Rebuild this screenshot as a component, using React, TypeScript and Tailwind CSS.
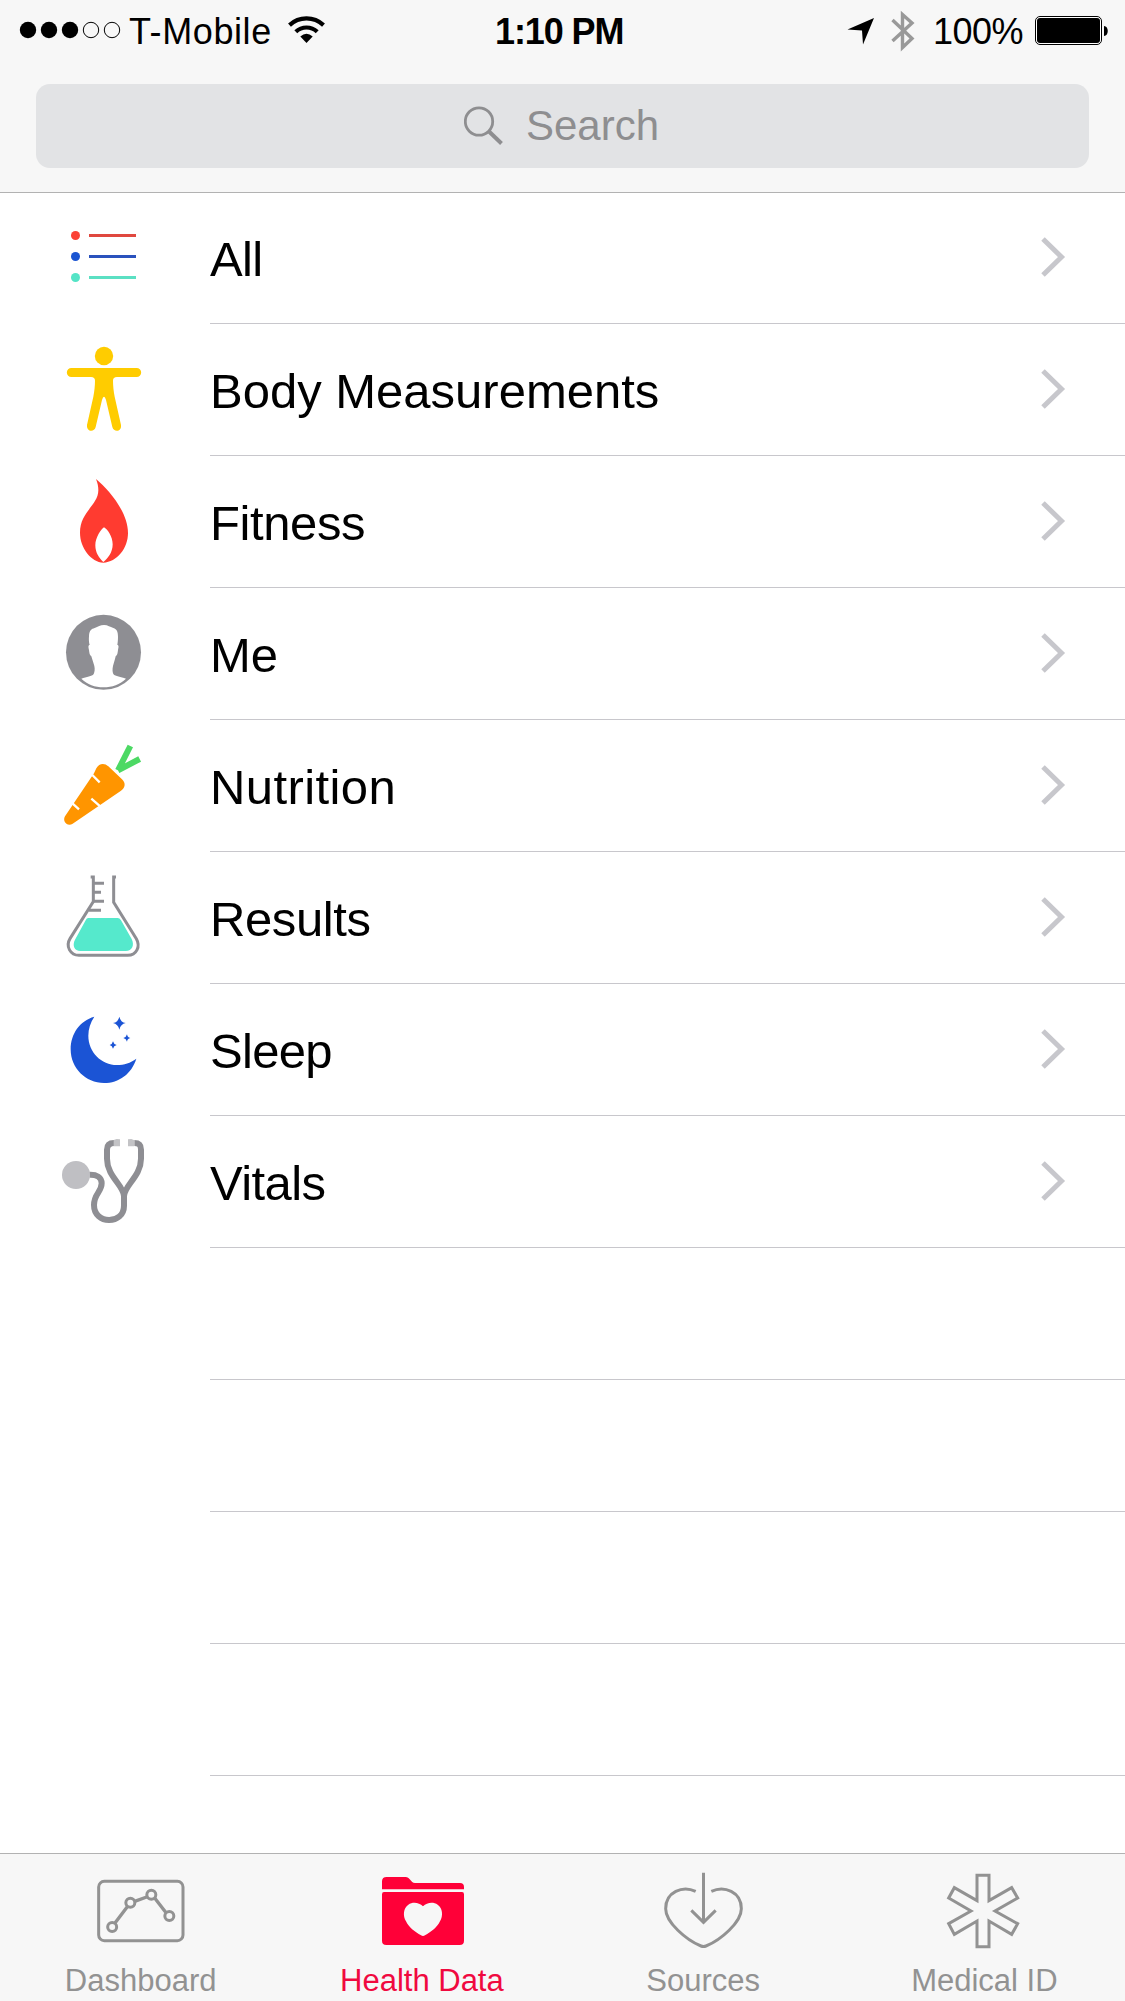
import type { ReactNode } from "react";

type Category = { name: string; viewBox: string; tracking: string; icon: ReactNode };

const categories: Category[] = [
  {
    name: "All",
    viewBox: "60 -24 270 396",
    tracking: "tracking-[-0.7px]",
    icon: (
      <>
        <circle cx="106.500" cy="106.500" r="13.500" fill="#fb4135" />
        <circle cx="106.500" cy="169.500" r="13.500" fill="#1b55d2" />
        <circle cx="106.500" cy="232.500" r="13.500" fill="#54e4c6" />
        <rect x="147" y="102" width="141" height="9" fill="#e0483f" />
        <rect x="147" y="165" width="141" height="9" fill="#2a52bd" />
        <rect x="147" y="228" width="141" height="9" fill="#5be0c3" />
      </>
    ),
  },
  {
    name: "Body Measurements",
    viewBox: "60 372 270 396",
    tracking: "tracking-normal",
    icon: (
      <g fill="#ffcc00">
        <circle cx="192" cy="468" r="27.500" />
        <path d="M94 504H290A13.500 13.500 0 0 1 290 531H231C223 531 219 535 219 542C219 556 221 575 224 590L243 675C246 696 221 698 217 681L198 600Q192 580 186 600L167 681C163 698 139 696 141 675L160 590C163 575 165 556 165 542C165 535 161 531 153 531H94A13.500 13.500 0 0 1 94 504Z" />
      </g>
    ),
  },
  {
    name: "Fitness",
    viewBox: "60 -12 270 396",
    tracking: "tracking-[-0.4px]",
    icon: (
      <path
        fill="#ff3b30"
        fillRule="evenodd"
        d="M168 57C205 88 264 155 264 219C264 265 231 306 190 308C153 306 120 264 120 218C120 155 175 136 175 91C175 79 173 69 168 57ZM192 202C183 208 166 233 166 256C166 279 178 295 190 306C204 295 218 277 218 253C218 230 202 207 192 202Z"
      />
    ),
  },
  {
    name: "Me",
    viewBox: "60 384 270 396",
    tracking: "tracking-normal",
    icon: (
      <>
        <circle cx="190.500" cy="577" r="112.500" fill="#8e8e93" />
        <path
          fill="#fff"
          d="M192 495C204 495 210 501 220 504C231 507 234 517 234 530C234 541 233 548 232 555C237 555 236 562 234 570C233 579 232 586 227 589C224 602 221 610 219 618C217 627 217 636 220 642C226 650 243 650 258 656C240 673 216 682 190.500 682C165 682 142 673 124 656C140 650 156 650 161 642C164 636 165 627 163 618C161 610 158 602 154 589C149 586 148 579 147 570C145 562 144 555 149 555C147 548 146 541 147 528C148 511 154 507 164 504C174 500 181 495 192 495Z"
        />
      </>
    ),
  },
  {
    name: "Nutrition",
    viewBox: "60 -15 270 396",
    tracking: "tracking-[0.4px]",
    icon: (
      <>
        <path d="M234 136L271 63M234 136L299 102" fill="none" stroke="#4cd964" strokeWidth="18" />
        <path
          fill="#ff9500"
          d="M162 145L169 130C177 114 194 113 205 124L246 163C258 174 256 189 243 197L98 296C83 306 66 290 75 274Z"
        />
        <path d="M157 150L179 172M154 221L184 247M94 232L117 253" fill="none" stroke="#fff" strokeWidth="7" />
      </>
    ),
  },
  {
    name: "Results",
    viewBox: "60 381 270 396",
    tracking: "tracking-[-0.4px]",
    icon: (
      <>
        <g fill="none" stroke="#8e8e93" strokeWidth="9">
          <path d="M152 456H160V530L90 641C76 664 91 691 117 691H263C290 691 302 664 289 641L221 532V456H228" />
          <path d="M160 475H192M160 502H183M158 529H192M147 556H183" />
        </g>
        <path fill="#55e9cc" d="M145 579H233Q239 579 243 586L275 642C284 660 277 678 257 678H121C103 678 96 661 105 644L137 586Q140 579 145 579Z" />
      </>
    ),
  },
  {
    name: "Sleep",
    viewBox: "60 -18 270 396",
    tracking: "tracking-[-0.7px]",
    icon: (
      <g fill="#1b54d5">
        <path d="M163 80C119 92 92 132 92 178C92 235 137 279 192 279C237 279 275 251 289 206C271 219 253 225 231 225C184 225 145 186 145 137C145 116 151 98 163 80Z" />
        <path d="M238 80Q242 97 257 99Q242 102 238 119Q234 102 219 99Q234 97 238 80Z" />
        <path d="M261 133Q262 142 271 144Q262 146 261 155Q259 146 250 144Q259 142 261 133Z" />
        <path d="M219 154Q221 163 230 165Q221 167 219 176Q217 167 209 165Q217 163 219 154Z" />
      </g>
    ),
  },
  {
    name: "Vitals",
    viewBox: "60 378 270 396",
    tracking: "tracking-[-0.6px]",
    icon: (
      <>
        <path
          fill="none"
          stroke="#8e8e93"
          strokeWidth="18"
          d="M222 459C207 459 201 466 201 479V506C201 560 252 586 252 619V647C252 705 162 705 162 645C162 611 185 606 185 580C185 562 170 553 148 554M283 459C298 459 303 466 303 479V506C303 560 252 586 252 619"
        />
        <circle cx="108" cy="555" r="42" fill="#bfbfc3" />
        <path fill="#c3c3c6" d="M221 450L230 447L240 448V469L221 469ZM264 448L274 447L283 451V469L264 469Z" />
      </>
    ),
  },
];

const tabs = [
  {
    label: "Dashboard",
    viewBox: "137 42 270 240",
    icon: (
      <g fill="none" stroke="#929292" strokeWidth="9">
        <rect x="145" y="124" width="253" height="178" rx="17" />
        <path d="M194 249L231 200M253 184L289 171M313 174L346 217" strokeWidth="10" />
        <circle cx="185.500" cy="261" r="13.500" />
        <circle cx="240" cy="188.500" r="13.500" />
        <circle cx="303" cy="164.500" r="13.500" />
        <circle cx="357" cy="228" r="13.500" />
      </g>
    ),
  },
  {
    label: "Health Data",
    active: true,
    viewBox: "171 42 270 240",
    icon: (
      <>
        <path
          fill="#ff0038"
          d="M186 148V124Q186 111 200 111H256C272 111 271 129 285 129H420Q432 129 432 141V148ZM192 156H426Q432 156 432 163V302Q432 315 419 315H199Q186 315 186 302V163Q186 156 192 156Z"
        />
        <path fill="#f7f7f7" d="M309 199C321 187 340 185 353 194C368 204 370 227 360 244C350 264 333 276 315 286Q309 290 303 286C285 276 268 264 258 244C248 227 250 204 265 194C278 185 297 187 309 199Z" />
      </>
    ),
  },
  {
    label: "Sources",
    viewBox: "114 42 270 240",
    icon: (
      <g fill="none" stroke="#929292" strokeWidth="9">
        <path d="M250.500 98V248M214 211L250.500 247L287 211" />
        <path d="M227 154C188 136 137 155 137 206C137 247 199 300 243 318Q250.500 321 258 318C302 300 364 247 364 206C364 155 313 136 274 154" />
      </g>
    ),
  },
  {
    label: "Medical ID",
    viewBox: "148 42 270 240",
    icon: (
      <path
        fill="none"
        stroke="#929292"
        strokeWidth="9"
        d="M262 106H298V182L366 143L384 174L316 213L384 251L366 283L298 243V320H262V243L194 283L177 251L244 213L177 174L194 143L262 182Z"
      />
    ),
  },
];

function StatusBar() {
  return (
    <div className="flex h-[62px] items-center text-[36px] leading-none text-black">
      <div className="flex w-[495px] items-center pl-[19px]">
        <svg width="104" height="18" viewBox="0 0 104 18" className="-mt-[2px]">
          <circle cx="9" cy="9" r="8.200" />
          <circle cx="30" cy="9" r="8.200" />
          <circle cx="51" cy="9" r="8.200" />
          <circle cx="72" cy="9" r="7.700" fill="none" stroke="#000" />
          <circle cx="93" cy="9" r="7.700" fill="none" stroke="#000" />
        </svg>
        <span className="ml-[6px] mt-[2px] tracking-[0.6px]">T-Mobile</span>
        <svg width="40" height="32" viewBox="0 0 40 32" className="ml-[14px] -mt-[2px]">
          <g fill="none" stroke="#000" strokeWidth="4.200">
            <path d="M3.500 11.100A25 25 0 0 1 37.500 11.100" />
            <path d="M9.800 17.800A15.500 15.500 0 0 1 31.200 17.800" />
          </g>
          <path d="M20.500 29L14.300 22.600Q20.500 17 26.700 22.600Z" />
        </svg>
      </div>
      <span className="mt-[2px] font-bold tracking-[-1.1px]">1:10 PM</span>
      <div className="flex flex-1 items-center justify-end pr-[16px]">
        <svg width="28" height="28" viewBox="0 0 28 28" className="-ml-px mr-px">
          <path d="M0.500 12.500L27 1L16 27.500L15 13.500Z" />
        </svg>
        <svg width="24" height="42" viewBox="0 0 24 42" className="ml-[15px] mr-px">
          <path d="M1.500 10L21 28.500L11.500 37.500V4.500L21 13L1.500 31" fill="none" stroke="#999" strokeWidth="3.400" />
        </svg>
        <span className="ml-[17px] mt-[2px] tracking-[-0.5px]">100%</span>
        <svg width="74" height="30" viewBox="0 0 74 30" className="ml-[12px]">
          <rect x="0.500" y="0.500" width="66" height="28" rx="4.500" fill="#fff" stroke="#000" />
          <rect x="2" y="2" width="63" height="25" rx="3" />
          <path d="M69 10C74 10 74 20 69 20Z" />
        </svg>
      </div>
    </div>
  );
}

function SearchBar() {
  return (
    <div className="mx-[36px] mt-[22px] flex h-[84px] items-center justify-center rounded-[14px] bg-[#e2e3e5] pr-[2px] text-[42px] leading-none text-[#8e8e90]">
      <svg width="40" height="40" viewBox="0 0 40 40" className="mr-[22px]">
        <circle cx="15" cy="15.500" r="13.700" fill="none" stroke="currentColor" strokeWidth="2.800" />
        <path d="M24.500 25L37.500 37.500" stroke="currentColor" strokeWidth="4" />
      </svg>
      <span>Search</span>
    </div>
  );
}

function CategoryRow({ name, viewBox, tracking, icon }: Category) {
  return (
    <div className="flex h-[132px] pl-[60px]">
      <svg width="90" height="132" viewBox={viewBox}>
        {icon}
      </svg>
      <div className="ml-[60px] flex flex-1 items-center justify-between border-b border-[#c8c7cc] pr-[59px]">
        <span className={`mt-[3px] text-[49px] leading-none ${tracking}`}>{name}</span>
        <svg width="26" height="44" viewBox="0 0 26 44" className="-mt-[1px]">
          <path d="M3 4L21.500 22L3 40" fill="none" stroke="#c7c7cc" strokeWidth="5" />
        </svg>
      </div>
    </div>
  );
}

export default function App() {
  return (
    <div className="flex h-[2001px] w-[1125px] flex-col overflow-hidden bg-white font-['Liberation_Sans',sans-serif] text-black">
      <header className="h-[192px] shrink-0 bg-[#f7f7f7] shadow-[0_1px_0_#b2b2b2]">
        <StatusBar />
        <SearchBar />
      </header>

      <main className="flex-1">
        {categories.map((category) => (
          <CategoryRow key={category.name} {...category} />
        ))}
        {[1, 2, 3, 4].map((n) => (
          <div key={n} className="ml-[210px] h-[132px] border-b border-[#c8c7cc]" />
        ))}
      </main>

      <nav className="grid h-[148px] shrink-0 grid-cols-4 border-t border-[#b2b2b2] bg-[#f7f7f7]">
        {tabs.map((tab) => (
          <div key={tab.label} className="flex flex-col items-center">
            <svg width="90" height="80" viewBox={tab.viewBox} className="overflow-visible">
              {tab.icon}
            </svg>
            <span
              className={`mt-[30px] text-[31px] leading-[34px] ${
                tab.active ? "text-[#f0093f]" : "text-[#929292]"
              }`}
            >
              {tab.label}
            </span>
          </div>
        ))}
      </nav>
    </div>
  );
}
